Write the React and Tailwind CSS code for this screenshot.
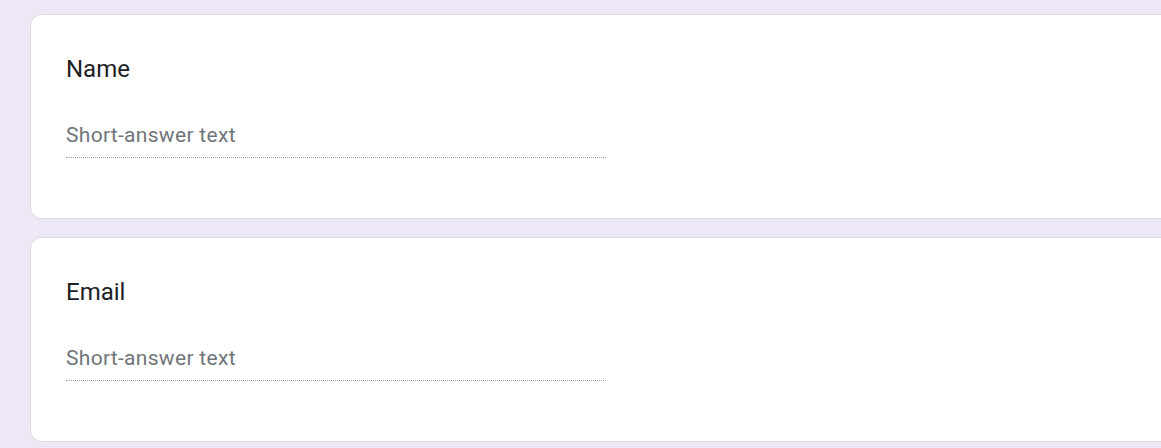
const questions = ['Name', 'Email'];

function QuestionCard({ title }) {
  return (
    <div className="w-[1155px] h-[205px] shrink-0 rounded-[12px] border border-[#dadce0] bg-white pt-[36px] pl-[35px]">
      <p className="text-[24px] leading-[36px] text-[#202124]">{title}</p>
      <div className="mt-[34px] w-[540px] border-b border-dotted border-[#9aa0a6] pb-[8px] text-[21px] leading-[28px] tracking-[0.3px] text-[#70757a]">
        Short-answer text
      </div>
    </div>
  );
}

export default function App() {
  return (
    <div
      className="h-[448px] w-[1161px] overflow-hidden bg-[#ede7f6] pl-[30px] pt-[14px]"
      style={{ fontFamily: 'Roboto, "Liberation Sans", sans-serif' }}
    >
      <div className="flex flex-col gap-[18px]">
        {questions.map((q) => (
          <QuestionCard key={q} title={q} />
        ))}
      </div>
    </div>
  );
}
